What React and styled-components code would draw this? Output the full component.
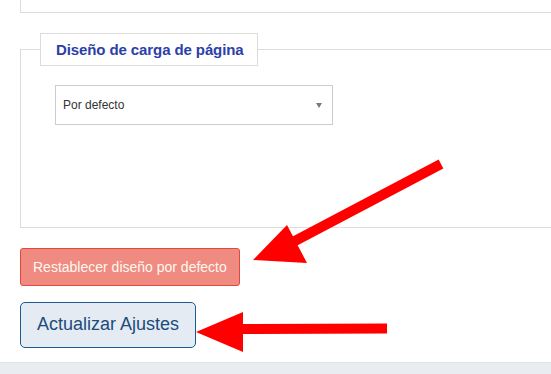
import React from "react";
import styled, { createGlobalStyle } from "styled-components";

const GlobalStyle = createGlobalStyle`
  html, body {
    margin: 0;
    padding: 0;
    background: #fff;
    overflow: hidden;
    font-family: "Liberation Sans", Arial, sans-serif;
  }
`;

// layout
const Page = styled.div`
  position: relative;
  width: 551px;
  height: 374px;
  overflow: hidden;
  display: flex;
  flex-direction: column;
`;
const Content = styled.div`
  padding-left: 20px;
  display: flex;
  flex-direction: column;
  align-items: flex-start;
`;
const TopPanel = styled.div`
  width: calc(100% + 20px);
  height: 13px;
  box-sizing: border-box;
  border-left: 1px solid #dcdcdc;
  border-bottom: 1px solid #dcdcdc;
`;

// fieldset
const Fieldset = styled.fieldset`
  width: calc(100% + 20px);
  box-sizing: border-box;
  margin: 20px 0 0;
  padding: 0 0 102px 19px;
  border: 1px solid #dcdcdc;
  min-inline-size: 0;
`;
const Legend = styled.legend`
  box-sizing: border-box;
  height: 33px;
  padding: 0 13px 0 15px;
  border: 1px solid #dcdcdc;
  font-size: 15px;
  font-weight: bold;
  line-height: 31px;
  letter-spacing: -0.1px;
  color: #2b40a9;
`;
const SelectBox = styled.div`
  box-sizing: border-box;
  width: 278px;
  height: 40px;
  margin: 19px 0 0 15px;
  padding: 0 10px 0 7px;
  border: 1px solid #cccccc;
  display: flex;
  align-items: center;
  justify-content: space-between;
  font-size: 12px;
  color: #333;
  background: #fff;
`;
const Caret = styled.span`
  width: 0;
  height: 0;
  border-left: 3px solid transparent;
  border-right: 3px solid transparent;
  border-top: 5px solid #7a7a7a;
`;

// buttons
const Button = styled.button`
  box-sizing: border-box;
  font-family: "Liberation Sans", Arial, sans-serif;
  display: flex;
  align-items: center;
  cursor: pointer;
  margin: ${(p) => p.$mt}px 0 0;
  height: ${(p) => p.$h}px;
  padding: 0 ${(p) => p.$px}px 1px;
  font-size: ${(p) => p.$fs}px;
  color: ${(p) => p.$color};
  background: ${(p) => p.$bg};
  border: 1px solid ${(p) => p.$border};
  border-radius: ${(p) => p.$radius}px;
`;

const BottomBand = styled.div`
  margin-top: auto;
  height: 11px;
  background: #e9ecf1;
  border-top: 1px solid #dde1e8;
`;

// annotation arrows over the page
const Overlay = styled.svg`
  position: absolute;
  left: 0;
  top: 0;
  pointer-events: none;
`;

export default function App() {
  return (
    <Page>
      <GlobalStyle />
      <Content>
        <TopPanel />
        <Fieldset>
          <Legend>Diseño de carga de página</Legend>
          <SelectBox>
            <span>Por defecto</span>
            <Caret />
          </SelectBox>
        </Fieldset>
        <Button
          $mt={20}
          $h={38}
          $px={12}
          $fs={14}
          $color="#fff8f0"
          $bg="#f08b81"
          $border="#e5483b"
          $radius={3}
        >
          Restablecer diseño por defecto
        </Button>
        <Button
          $mt={16}
          $h={46}
          $px={16}
          $fs={18}
          $color="#1b4b7c"
          $bg="#e4ebf2"
          $border="#1d5a91"
          $radius={5}
        >
          Actualizar Ajustes
        </Button>
      </Content>
      <BottomBand />
      <Overlay width="551" height="374" viewBox="0 0 551 374">
        <line x1="441" y1="164" x2="293" y2="242" stroke="#ff0000" strokeWidth="10" />
        <polygon points="253,260 287,225 307,263" fill="#ff0000" />
        <line x1="240" y1="329" x2="387" y2="328.5" stroke="#ff0000" strokeWidth="10" />
        <polygon points="196,332 243,312 243,352" fill="#ff0000" />
      </Overlay>
    </Page>
  );
}
